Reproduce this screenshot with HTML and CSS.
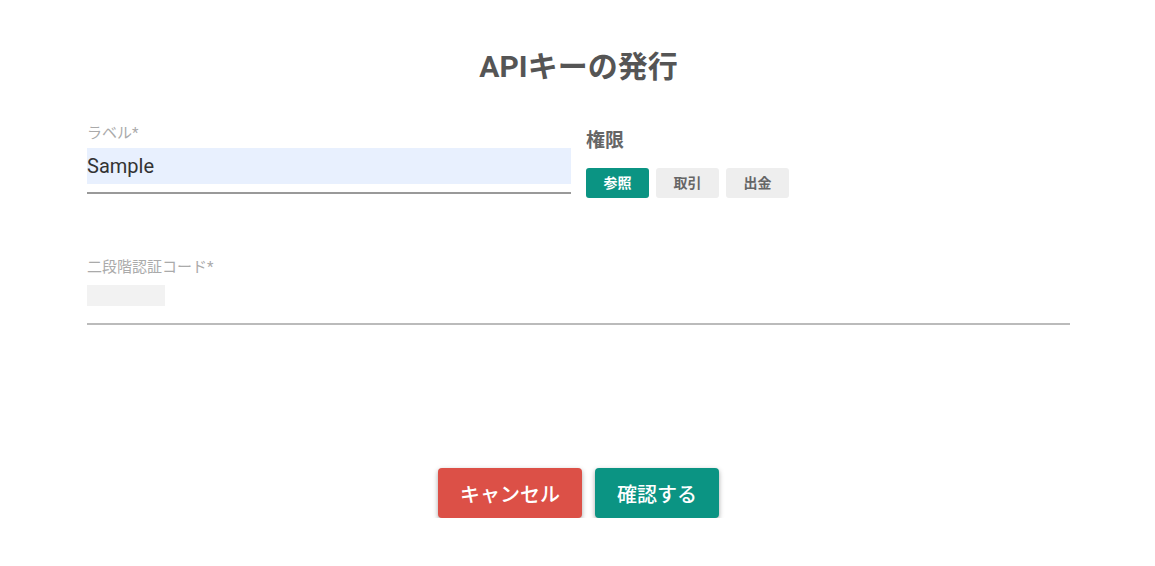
FILE: index.html
```html
<!DOCTYPE html>
<html lang="ja">
<head>
  <meta charset="UTF-8">
  <title>APIキーの発行</title>
  <link rel="stylesheet" href="styles.css">
</head>
<body>
  <div class="dialog">
    <h2 class="title">APIキーの発行</h2>

    <div class="row">
      <div class="field label-field">
        <label class="field-label">ラベル*</label>
        <div class="input filled"><span class="value">Sample</span></div>
      </div>
      <div class="perms">
        <p class="perms-title">権限</p>
        <div class="chips">
          <span class="chip active">参照</span>
          <span class="chip">取引</span>
          <span class="chip">出金</span>
        </div>
      </div>
    </div>

    <div class="field code-field">
      <label class="field-label">二段階認証コード*</label>
      <div class="input"><span class="code-box"></span></div>
    </div>

    <div class="actions">
      <button class="btn btn-cancel">キャンセル</button>
      <button class="btn btn-ok">確認する</button>
    </div>
  </div>
</body>
</html>
```

FILE: styles.css
```css
body {
  margin: 0;
  background-color: #fff;
  font-family: Roboto, "Noto Sans CJK JP", sans-serif;
  color: #444;
}

.dialog {
  width: 983px;
  padding: 50px 0 0 87px;
}

.title {
  margin: 0 0 36px;
  text-align: center;
  font-size: 30px;
  font-weight: bold;
  color: #555;
  line-height: 34px;
}

.row {
  display: flex;
  gap: 15px;
}

.field-label {
  display: block;
  font-size: 15px;
  color: #aaa;
  line-height: 18px;
}

.label-field {
  width: 484px;
  padding-top: 4px;
}

.input {
  border-bottom: 2px solid #999;
  padding-bottom: 8px;
}

.value {
  display: block;
  margin-top: 6px;
  height: 36px;
  line-height: 36px;
  background-color: #e8f0fe;
  font-size: 20px;
  color: #333;
}

.perms {
  padding-top: 10px;
}

.perms-title {
  margin: 0 0 16px;
  font-size: 19px;
  font-weight: bold;
  color: #666;
  line-height: 22px;
}

.chips {
  display: flex;
  gap: 7px;
}

.chip {
  width: 63px;
  height: 30px;
  line-height: 30px;
  text-align: center;
  font-size: 14px;
  font-weight: bold;
  border-radius: 3px;
  background-color: #eee;
  color: #666;
}

.chip.active {
  background-color: #0b9483;
  color: #fff;
}

.code-field {
  margin-top: 60px;
}

.code-field .input {
  margin-top: 9px;
  border-bottom-color: #bbb;
  padding-bottom: 17px;
}

.code-box {
  display: block;
  width: 78px;
  height: 21px;
  background-color: #f2f2f2;
}

.actions {
  display: flex;
  justify-content: center;
  gap: 13px;
  margin-top: 143px;
}

.btn {
  height: 50px;
  border: none;
  border-radius: 4px;
  font-family: inherit;
  font-size: 20px;
  font-weight: 500;
  color: #fff;
  box-shadow: 0 2px 5px rgba(0, 0, 0, 0.35);
}

.btn-cancel {
  width: 144px;
  background-color: #dc5047;
}

.btn-ok {
  width: 124px;
  background-color: #0b9483;
}
```
